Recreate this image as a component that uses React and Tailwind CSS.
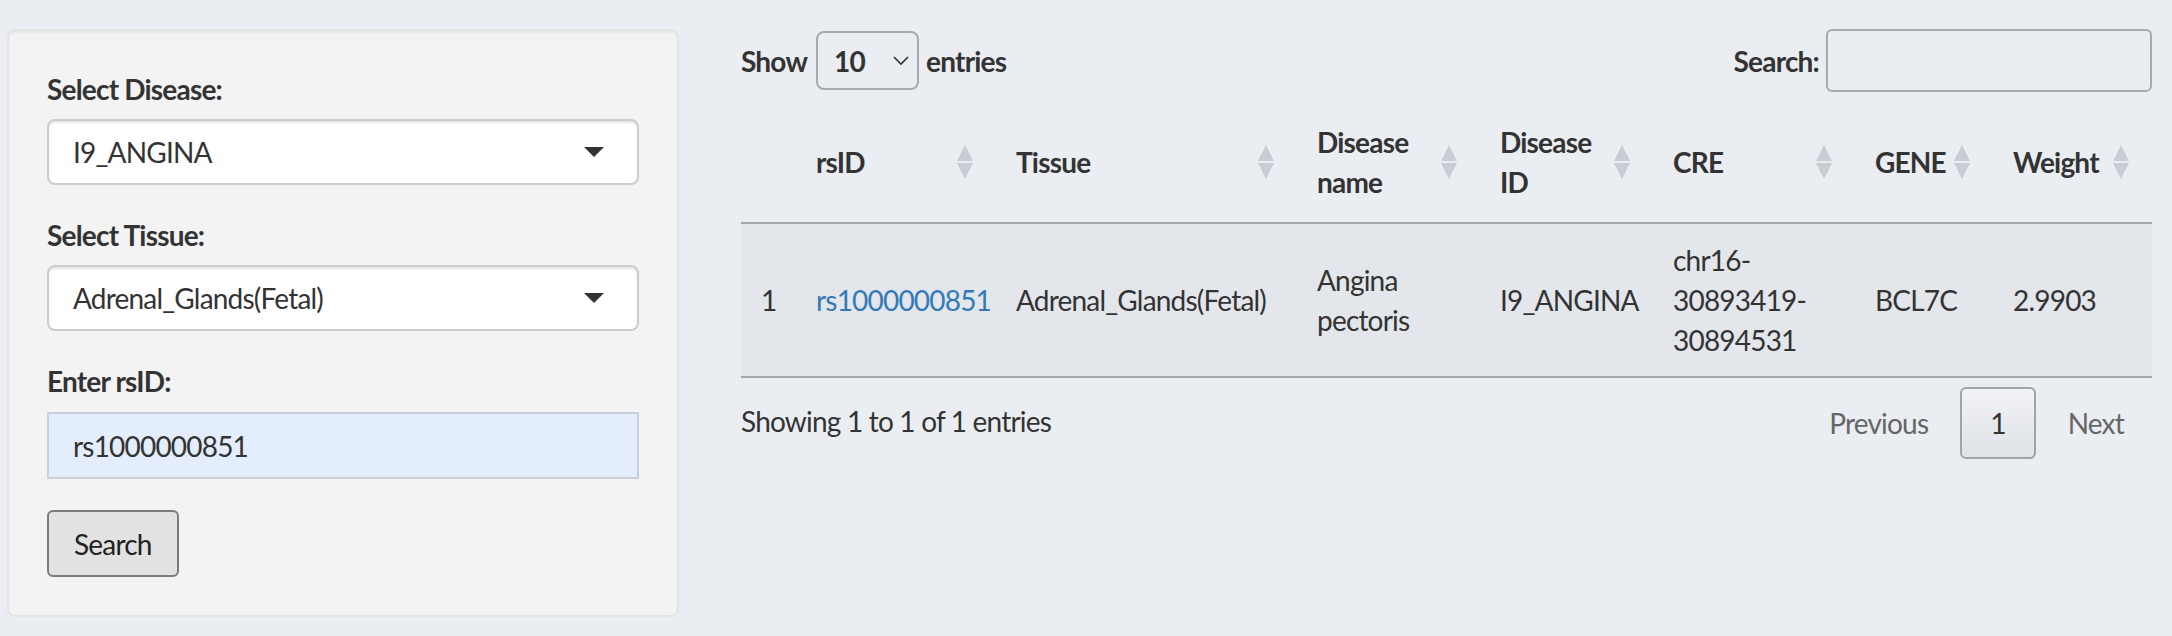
import React from 'react';

const font = { fontFamily: 'Lato, "Liberation Sans", sans-serif' };

const SortIcon = () => (
  <svg className="absolute right-[23px] top-1/2 -translate-y-1/2" width="16" height="34" viewBox="0 0 16 34">
    <polygon points="8,0 16,16 0,16" fill="#c9cdd3" />
    <polygon points="0,18 16,18 8,34" fill="#c9cdd3" />
  </svg>
);

const Caret = () => (
  <svg width="20" height="10" viewBox="0 0 20 10">
    <polygon points="0,0 20,0 10,10" fill="#333333" />
  </svg>
);

const columns = [
  { key: 'idx', label: '', width: 55 },
  { key: 'rsid', label: 'rsID', width: 200 },
  { key: 'tissue', label: 'Tissue', width: 301 },
  { key: 'dname', label: 'Disease name', width: 183 },
  { key: 'did', label: 'Disease ID', width: 173 },
  { key: 'cre', label: 'CRE', width: 202 },
  { key: 'gene', label: 'GENE', width: 138 },
  { key: 'weight', label: 'Weight', width: 159 },
];

const App = () => {
  return (
    <div className="w-[2172px] h-[636px] overflow-hidden bg-[#eaeef2] text-[#333333] text-[28px] leading-[40px] tracking-[-0.8px] flex items-start pl-[7px] pr-[20px] pt-[29px] gap-[62px]" style={font}>
      {/* Sidebar filters */}
      <div className="w-[672px] shrink-0 bg-[#f3f3f3] border-2 border-[#e3e3e3] rounded-lg p-[38px] shadow-[inset_0_2px_2px_rgba(0,0,0,0.05)]">
        <div className="mb-[30px]">
          <label className="block font-bold mb-[10px]">Select Disease:</label>
          <div className="h-[66px] bg-white border-2 border-[#cccccc] rounded-lg flex items-center justify-between pl-[24px] pr-[33px] shadow-[inset_0_2px_2px_rgba(0,0,0,0.1)]">
            <span>I9_ANGINA</span>
            <Caret />
          </div>
        </div>
        <div className="mb-[30px]">
          <label className="block font-bold mb-[10px]">Select Tissue:</label>
          <div className="h-[66px] bg-white border-2 border-[#cccccc] rounded-lg flex items-center justify-between pl-[24px] pr-[33px] shadow-[inset_0_2px_2px_rgba(0,0,0,0.1)]">
            <span>Adrenal_Glands(Fetal)</span>
            <Caret />
          </div>
        </div>
        <div className="mb-[31px]">
          <label className="block font-bold mb-[11px]">Enter rsID:</label>
          <div className="h-[67px] bg-[#e3edfb] border-2 border-[#c8d0db] flex items-center pl-[24px]">
            rs1000000851
          </div>
        </div>
        <button className="h-[67px] px-[25px] bg-[#e2e2e2] border-2 border-[#7b7b7b] rounded-md text-[#222]">
          Search
        </button>
      </div>

      {/* Results table */}
      <div className="flex-1 min-w-0">
        <div className="flex items-center justify-between">
          <div className="flex items-center font-bold">
            <span>Show</span>
            <div className="ml-[9px] mr-[7px] w-[103px] h-[59px] border-2 border-[#aaaaaa] rounded-lg flex items-center justify-between pl-[16px] pr-[8px]">
              <span>10</span>
              <svg width="16" height="10" viewBox="0 0 16 10">
                <polyline points="1,1 8,8 15,1" fill="none" stroke="#333" strokeWidth="1.6" />
              </svg>
            </div>
            <span>entries</span>
          </div>
          <div className="flex items-center font-bold">
            <span>Search:</span>
            <div className="ml-[7px] w-[326px] h-[63px] border-2 border-[#aaaaaa] rounded-md bg-transparent" />
          </div>
        </div>

        <table className="table-fixed w-full border-collapse mt-[10px]">
          <colgroup>
            {columns.map((c) => (
              <col key={c.key} style={{ width: c.width }} />
            ))}
          </colgroup>
          <thead>
            <tr className="border-b-2 border-[#a3a6aa]">
              {columns.map((c) => (
                <th key={c.key} className="relative text-left font-bold align-middle pt-[20px] pb-[20px] pl-[20px] pr-[36px]">
                  {c.label}
                  {c.label && <SortIcon />}
                </th>
              ))}
            </tr>
          </thead>
          <tbody>
            <tr className="bg-[#e3e6ea] border-b-2 border-[#a3a6aa]">
              <td className="px-[20px] py-[16px] align-middle">1</td>
              <td className="px-[20px] py-[16px] align-middle text-[#337ab7]">rs1000000851</td>
              <td className="px-[20px] py-[16px] align-middle">Adrenal_Glands(Fetal)</td>
              <td className="px-[20px] py-[16px] align-middle">Angina pectoris</td>
              <td className="px-[20px] py-[16px] align-middle">I9_ANGINA</td>
              <td className="px-[20px] py-[16px] align-middle">chr16-30893419-30894531</td>
              <td className="px-[20px] py-[16px] align-middle">BCL7C</td>
              <td className="px-[20px] py-[16px] align-middle">2.9903</td>
            </tr>
          </tbody>
        </table>

        <div className="flex items-start justify-between">
          <div className="pt-[23px]">Showing 1 to 1 of 1 entries</div>
          <div className="flex items-center pt-[9px] gap-[4px]">
            <span className="px-[28px] py-[15px] text-[#666666]">Previous</span>
            <span className="px-[28px] py-[14px] border-2 border-[#a0a3a7] rounded-md bg-gradient-to-b from-[#f1f3f5] to-[#dfe2e6]">1</span>
            <span className="px-[28px] py-[15px] text-[#666666]">Next</span>
          </div>
        </div>
      </div>
    </div>
  );
};

export default App;
